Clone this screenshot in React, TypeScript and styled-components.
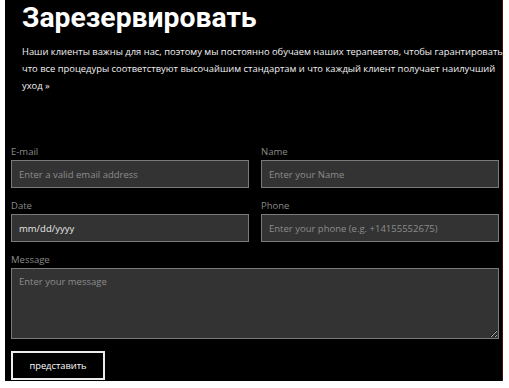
import React from 'react'
import styled, { createGlobalStyle } from 'styled-components'

const GlobalStyle = createGlobalStyle`
  html, body {
    margin: 0;
    padding: 0;
    background: #fff;
  }
`

export default function App() {
  return (
    <>
      <GlobalStyle />
      <Section>
        <Intro>
          <Title>Зарезервировать</Title>
          <Lead>
            Наши клиенты важны для нас, поэтому мы постоянно обучаем наших терапевтов, чтобы гарантировать,
            что все процедуры соответствуют высочайшим стандартам и что каждый клиент получает наилучший
            уход »
          </Lead>
        </Intro>
        <Form onSubmit={(e) => e.preventDefault()}>
          <Field>
            <Label>E-mail</Label>
            <Input type="email" placeholder="Enter a valid email address" />
          </Field>
          <Field>
            <Label>Name</Label>
            <Input type="text" placeholder="Enter your Name" />
          </Field>
          <Field>
            <Label>Date</Label>
            <Input type="text" placeholder="mm/dd/yyyy" $strong />
          </Field>
          <Field>
            <Label>Phone</Label>
            <Input type="tel" placeholder="Enter your phone (e.g. +14155552675)" />
          </Field>
          <Field $wide>
            <Label>Message</Label>
            <TextArea placeholder="Enter your message" />
          </Field>
          <SubmitRow>
            <Submit type="submit">представить</Submit>
          </SubmitRow>
        </Form>
      </Section>
    </>
  )
}

const Section = styled.section`
  margin-left: 5px;
  width: 498px;
  box-sizing: border-box;
  padding: 0 3px 1px 6px;
  background: #000;
  border-right: 1px solid #4a0c0c;
  color: #fff;
  font-family: 'Open Sans', sans-serif;
`

const Intro = styled.div`
  padding: 1px 0 0 11px;
`

const Title = styled.h1`
  margin: 0;
  font-family: Roboto, sans-serif;
  font-weight: 700;
  font-size: 28.3px;
  line-height: 33px;
  color: #fff;
`

const Lead = styled.p`
  margin: 9px -12px 0 0;
  font-size: 9.4px;
  line-height: 17px;
  color: #f2f2f2;
`

const Form = styled.form`
  display: grid;
  grid-template-columns: 1fr 1fr;
  column-gap: 12px;
  row-gap: 11px;
  margin-top: 51px;
`

const Field = styled.div<{ $wide?: boolean }>`
  display: flex;
  flex-direction: column;
  grid-column: ${({ $wide }) => ($wide ? '1 / -1' : 'auto')};
`

const Label = styled.label`
  font-size: 9.5px;
  line-height: 14px;
  margin-bottom: 1px;
  color: #8a8a8a;
`

const Input = styled.input<{ $strong?: boolean }>`
  height: 28px;
  box-sizing: border-box;
  padding: 0 7px;
  background: #333;
  border: 1px solid #7a7a7a;
  border-radius: 0;
  color: #e6e6e6;
  font-family: 'Open Sans', sans-serif;
  font-size: 9.5px;
  outline: none;

  &::placeholder {
    color: ${({ $strong }) => ($strong ? '#e6e6e6' : '#8c8c8c')};
    opacity: 1;
  }
`

const TextArea = styled.textarea`
  height: 71px;
  box-sizing: border-box;
  padding: 6px 7px;
  background: #333;
  border: 1px solid #7a7a7a;
  border-radius: 0;
  color: #e6e6e6;
  font-family: 'Open Sans', sans-serif;
  font-size: 9.5px;
  resize: vertical;
  outline: none;

  &::placeholder {
    color: #8c8c8c;
    opacity: 1;
  }
`

const SubmitRow = styled.div`
  grid-column: 1 / -1;
  padding-top: 1px;
`

const Submit = styled.button`
  width: 94px;
  height: 29px;
  background: #000;
  border: 2px solid #ececec;
  color: #fff;
  font-family: 'Open Sans', sans-serif;
  font-size: 9.3px;
  cursor: pointer;
`
